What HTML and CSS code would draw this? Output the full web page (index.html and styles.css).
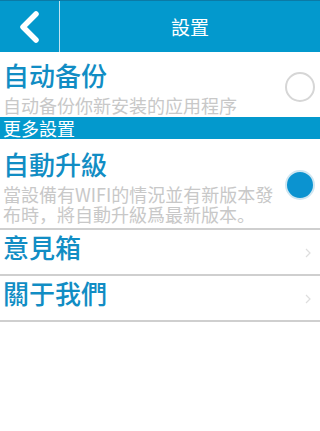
FILE: index.html
```html
<!DOCTYPE html>
<html>
	<head>
		<meta charset="UTF-8">
		<title>設置</title>
		<link rel="stylesheet" href="styles.css">
	</head>
	<body>
		<div class="top-bar">
			<a href="javascript:void(0);" class="back-btn">
				<svg width="24" height="32" viewBox="0 0 24 32">
					<polyline points="19,3 6,16 19,29" fill="none" stroke="#fff" stroke-width="5.5" stroke-linecap="round" stroke-linejoin="round"/>
				</svg>
			</a>
			<div class="top-title">設置</div>
		</div>
		<div class="set-item item-backup">
			<div class="item-text">
				<div class="item-name">自动备份</div>
				<div class="item-desc">自动备份你新安装的应用程序</div>
			</div>
			<span class="radio"></span>
		</div>
		<div class="section-title">更多設置</div>
		<div class="set-item item-upgrade">
			<div class="item-text">
				<div class="item-name">自動升級</div>
				<div class="item-desc">當設備有WIFI的情況並有新版本發布時，將自動升級爲最新版本。</div>
			</div>
			<span class="radio radio-on"></span>
		</div>
		<div class="set-item item-link">
			<div class="item-name">意見箱</div>
			<svg class="arrow" width="6" height="10" viewBox="0 0 6 10"><polyline points="1,1 5,5 1,9" fill="none" stroke="#dedede" stroke-width="1.2"/></svg>
		</div>
		<div class="set-item item-link">
			<div class="item-name">關于我們</div>
			<svg class="arrow" width="6" height="10" viewBox="0 0 6 10"><polyline points="1,1 5,5 1,9" fill="none" stroke="#dedede" stroke-width="1.2"/></svg>
		</div>
	</body>
</html>
```

FILE: styles.css
```css
body {
	margin: 0;
	background: #fff;
	font-family: "Noto Sans CJK SC", "Noto Sans CJK TC", sans-serif;
}
div, span, a {
	padding: 0;
	margin: 0;
}
a {
	text-decoration: none;
}
.top-bar {
	display: flex;
	height: 51px;
	background: #0399cd;
	border-top: 1px solid #0b7aa6;
}
.back-btn {
	width: 60px;
	display: flex;
	align-items: center;
	justify-content: center;
	padding-right: 2px;
	box-sizing: border-box;
	border-right: 1px solid #bfe3f1;
}
.top-title {
	flex: 1;
	text-align: center;
	line-height: 51px;
	font-size: 19px;
	color: #fff;
	padding-bottom: 2px;
	box-sizing: border-box;
}
.set-item {
	display: flex;
	align-items: center;
	padding: 0 5px 0 3px;
	border-bottom: 2px solid #cfcfcf;
}
.item-text {
	flex: 1;
}
.item-name {
	font-size: 26px;
	line-height: 30px;
	font-weight: 500;
	color: #118dc4;
}
.item-desc {
	font-size: 18px;
	line-height: 20px;
	color: #c8c8c8;
	margin-top: 5px;
}
.item-backup {
	height: 65px;
	box-sizing: border-box;
	padding-top: 8px;
	padding-bottom: 3px;
	border-bottom: none;
}
.item-upgrade {
	padding-top: 10px;
	padding-bottom: 4px;
}
.item-upgrade .item-text {
	padding-right: 2px;
}
.item-upgrade .item-desc {
	margin-top: 5px;
}
.item-link {
	height: 46px;
	box-sizing: border-box;
	align-items: flex-start;
	padding-top: 0;
}
.item-link .item-name {
	flex: 1;
	line-height: 30px;
	margin-top: 2px;
}
.arrow {
	margin-top: 18px;
	margin-right: 4px;
}
.section-title {
	height: 22px;
	line-height: 22px;
	background: #0399cd;
	color: #fff;
	font-size: 18px;
	padding-left: 3px;
}
.radio {
	width: 30px;
	height: 30px;
	box-sizing: border-box;
	border: 2px solid #d6d6d6;
	border-radius: 50%;
	background: #fff;
}
.radio-on {
	background: #0b93d0;
	border: 2px solid #cfe6f1;
	margin-bottom: 4px;
}
```
